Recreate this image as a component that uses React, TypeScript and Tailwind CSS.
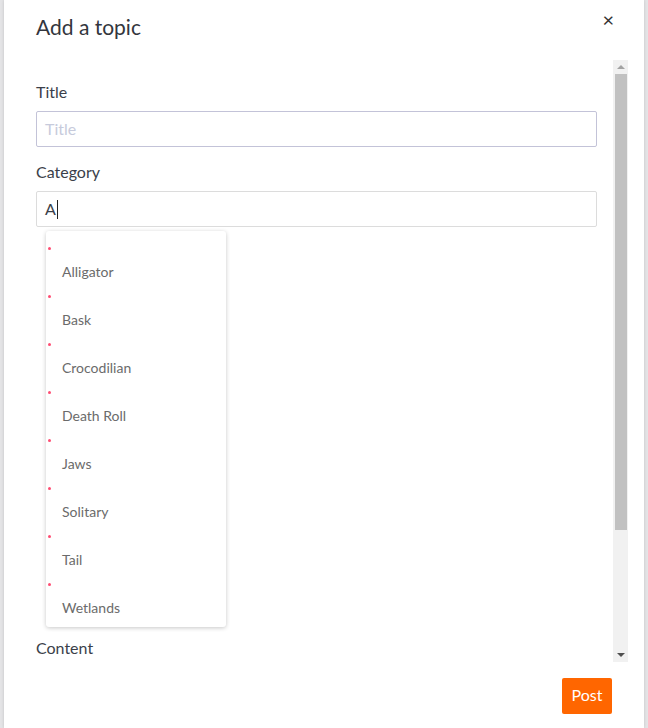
import React from "react";

const items = ["Alligator", "Bask", "Crocodilian", "Death Roll", "Jaws", "Solitary", "Tail", "Wetlands"];

export default function App() {
  return (
    <div className="w-[648px] h-[728px] bg-[#e4e4e6] px-[4px] overflow-hidden" style={{ fontFamily: "Lato, 'Open Sans', sans-serif" }}>
      <div className="bg-white h-full flex flex-col shadow-[0_0_3px_rgba(0,0,0,0.15)]">
        <div className="h-[60px] flex items-start justify-between pl-[32px] pr-[30px]">
          <h2 className="text-[21px] leading-[28px] mt-[13px] text-[#33363d]">Add a topic</h2>
          <button className="mt-[7px] text-[20px] leading-[24px] text-[#333]">×</button>
        </div>
        <div className="flex h-[602px]">
          <div className="flex-1 pl-[32px] pr-[16px] pt-[20px] overflow-hidden">
            <label className="block text-[16px] leading-[24px] text-[#3b3f4a]">Title</label>
            <div className="mt-[7px] h-[36px] border border-[#c3c3d8] rounded-[2px] flex items-center px-[8px] pb-[1px] text-[16px] text-[#c7cbdc]">Title</div>
            <label className="block mt-[13px] text-[16px] leading-[24px] text-[#3b3f4a]">Category</label>
            <div className="mt-[7px] h-[36px] border border-[#dcdcdc] rounded-[2px] flex items-center px-[8px] text-[16px] text-[#3b3f4a]">
              A<span className="inline-block w-[1px] h-[19px] bg-[#222] ml-[1px]" />
            </div>
            <div className="mt-[4px] ml-[10px] w-[180px] bg-white rounded-[3px] shadow-[0_1px_4px_rgba(0,0,0,0.22)] pt-[8px] pb-[4px]">
              {items.map((it) => (
                <div key={it} className="h-[48px] relative">
                  <span className="absolute left-[2px] top-[8px] w-[3px] h-[3px] rounded-full bg-[#ff4d73]" />
                  <div className="absolute left-[16px] top-[23px] text-[14px] leading-[20px] text-[#6b6b6b]">{it}</div>
                </div>
              ))}
            </div>
            <label className="block mt-[9px] text-[16px] leading-[24px] text-[#3b3f4a]">Content</label>
          </div>
          <div className="w-[15px] bg-[#f1f1f1] flex flex-col items-center mr-[16px]">
            <div className="h-[14px] flex items-center justify-center">
              <div className="w-0 h-0 border-l-[4px] border-r-[4px] border-b-[4px] border-l-transparent border-r-transparent border-b-[#a3a3a3]" />
            </div>
            <div className="w-[12px] h-[456px] bg-[#c1c1c1]" />
            <div className="flex-1" />
            <div className="h-[14px] flex items-center justify-center">
              <div className="w-0 h-0 border-l-[4px] border-r-[4px] border-t-[4px] border-l-transparent border-r-transparent border-t-[#505050]" />
            </div>
          </div>
        </div>
        <div className="flex justify-end pr-[32px] pt-[16px]">
          <button className="h-[36px] w-[50px] bg-[#ff6600] text-white text-[16px] pb-[2px] rounded-[2px]">Post</button>
        </div>
      </div>
    </div>
  );
}
